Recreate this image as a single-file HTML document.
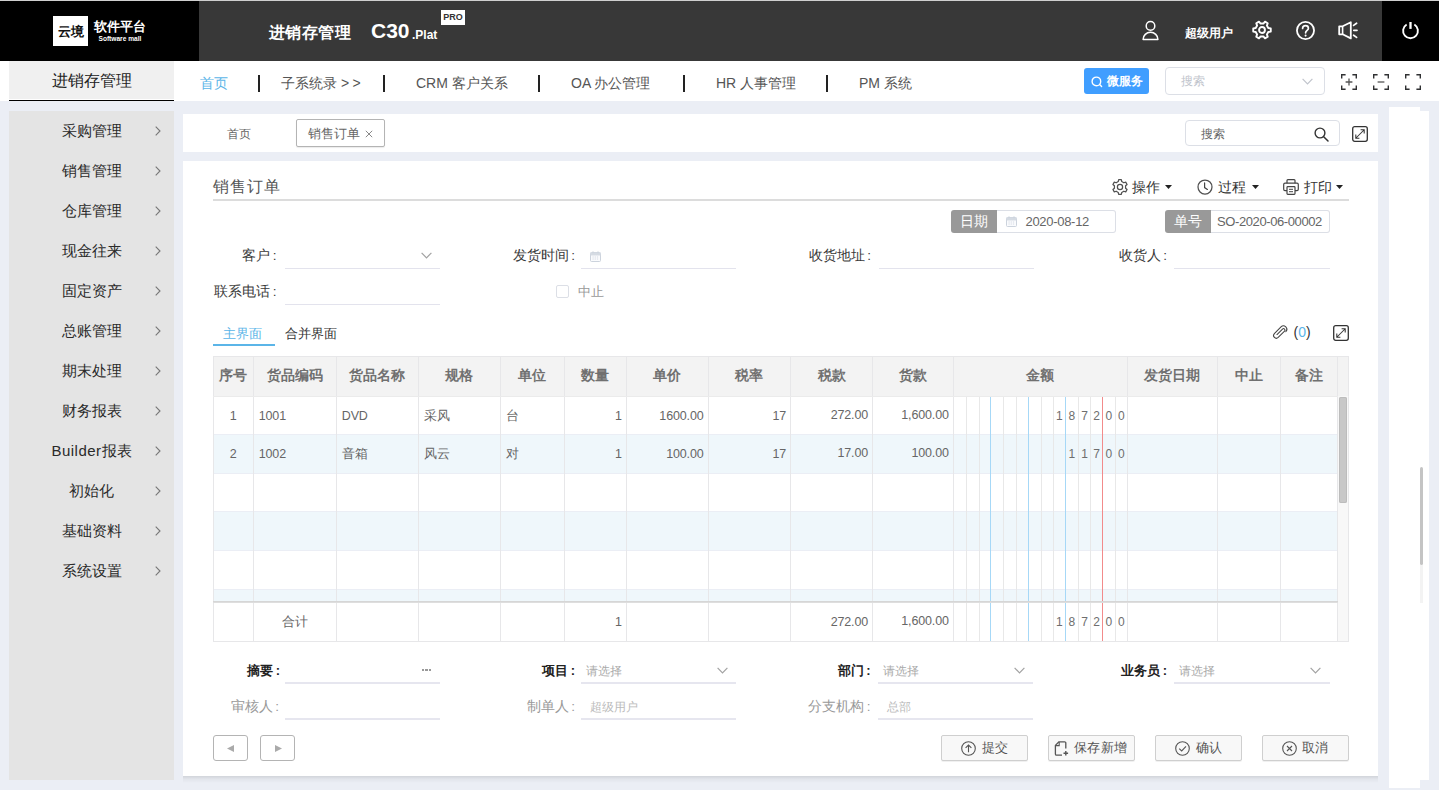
<!DOCTYPE html>
<html lang="zh">
<head>
<meta charset="utf-8">
<title>销售订单</title>
<style>
*{box-sizing:border-box;margin:0;padding:0}
html,body{width:1439px;height:790px;overflow:hidden}
body{position:relative;background:#ebeef5;font-family:"Liberation Sans",sans-serif;color:#333;font-size:13px}
.a{position:absolute;white-space:nowrap}
svg{position:absolute;overflow:visible}
</style>
</head>
<body>
<!-- header -->
<div class="a" style="left:0px;top:0px;width:199px;height:61px;background:#000"></div>
<div class="a" style="left:199px;top:0px;width:1183px;height:61px;background:#383838"></div>
<div class="a" style="left:1382px;top:0px;width:57px;height:61px;background:#000"></div>
<div class="a" style="left:0px;top:0px;width:1439px;height:1px;background:#cfcfcf"></div>
<div class="a" style="left:53px;top:16px;width:35px;height:30px;background:#fff;color:#111;font-weight:bold;font-size:13px;line-height:31px;text-align:center">云境</div>
<div class="a" style="top:17.4px;font-size:13px;line-height:20px;height:20px;color:#fff;font-weight:bold;left:94px;">软件平台</div>
<div class="a" style="top:33.6px;font-size:6.6px;line-height:10px;height:10px;color:#fff;font-weight:bold;left:98.5px;">Software mall</div>
<div class="a" style="top:22.5px;font-size:16px;line-height:20px;height:20px;color:#fff;font-weight:bold;left:269px;letter-spacing:.4px;">进销存管理</div>
<div class="a" style="top:18.5px;font-size:21px;line-height:24px;height:24px;color:#fff;font-weight:bold;left:371px;">C30</div>
<div class="a" style="top:27.5px;font-size:12px;line-height:14px;height:14px;color:#fff;font-weight:bold;left:412px;">.Plat</div>
<div class="a" style="left:441px;top:10px;width:24px;height:15px;background:#fff;color:#333;font-weight:bold;font-size:9px;line-height:15px;text-align:center">PRO</div>
<svg style="left:1141.5px;top:21.2px" width="18" height="20" viewBox="0 0 18 20" ><circle cx="8.5" cy="4.9" r="4.3" fill="none" stroke="#fff" stroke-width="1.5"/><path d="M1.1 18.4 A7.4 7.1 0 0 1 15.9 18.4 Z" fill="none" stroke="#fff" stroke-width="1.5" stroke-linejoin="round"/></svg>
<div class="a" style="top:22.5px;font-size:12px;line-height:20px;height:20px;color:#fff;font-weight:bold;left:1185px;">超级用户</div>
<svg style="left:1252px;top:20px" width="20" height="20" viewBox="0 0 20 20" ><path d="M11.37 3.56 L13.01 1.63 L15.74 3.20 L14.89 5.59 L16.26 7.96 L18.76 8.42 L18.76 11.58 L16.26 12.04 L14.89 14.41 L15.74 16.80 L13.01 18.37 L11.37 16.44 L8.63 16.44 L6.99 18.37 L4.26 16.80 L5.11 14.41 L3.74 12.04 L1.24 11.58 L1.24 8.42 L3.74 7.96 L5.11 5.59 L4.26 3.20 L6.99 1.63 L8.63 3.56 Z" fill="none" stroke="#fff" stroke-width="1.9" stroke-linejoin="round"/><circle cx="10" cy="10" r="2.94" fill="none" stroke="#fff" stroke-width="1.9"/></svg>
<svg style="left:1295.5px;top:20.5px" width="19" height="19" viewBox="0 0 19 19" ><circle cx="9.5" cy="9.5" r="8.55" fill="none" stroke="#fff" stroke-width="1.8"/><path d="M6.6 7.5 C6.6 5.5 7.9 4.6 9.5 4.6 C11.1 4.6 12.4 5.6 12.4 7.2 C12.4 9.3 9.6 9.4 9.6 11.8" fill="none" stroke="#fff" stroke-width="1.7" stroke-linecap="round"/><circle cx="9.6" cy="14.6" r="1.05" fill="#fff"/></svg>
<svg style="left:1338px;top:21px" width="20" height="19" viewBox="0 0 20 19" ><path d="M1.2 5.3 H4.6 L12.8 1.2 V17.4 L4.6 13.3 H1.2 Z" fill="none" stroke="#fff" stroke-width="1.8" stroke-linejoin="round"/><path d="M4.6 5.3 V13.3" stroke="#fff" stroke-width="1.6"/><path d="M15.6 4.4 L18.6 2.2 M15.8 9.3 H19 M15.6 14.2 L18.6 16.4" stroke="#fff" stroke-width="1.7" stroke-linecap="round"/></svg>
<svg style="left:1401px;top:21px" width="19" height="19" viewBox="0 0 19 19" ><path d="M5.65 3.5 A7.4 7.4 0 1 0 13.35 3.5" fill="none" stroke="#fff" stroke-width="1.9"/><path d="M9.5 1 V7.9" stroke="#fff" stroke-width="2.3"/></svg>
<!-- nav -->
<div class="a" style="left:0px;top:61px;width:1439px;height:40px;background:#fff"></div>
<div class="a" style="left:9px;top:61px;width:165px;height:38px;background:#f0f0f0;text-align:center;font-size:16px;line-height:40px;color:#222">进销存管理</div>
<div class="a" style="left:9px;top:99.8px;width:165px;height:1.2px;background:#000"></div>
<div class="a" style="top:73px;font-size:14px;line-height:20px;height:20px;color:#5bb5e8;left:200px;">首页</div>
<div class="a" style="left:258.3px;top:75px;width:1.3px;height:17px;background:#222"></div>
<div class="a" style="left:383.3px;top:75px;width:1.3px;height:17px;background:#222"></div>
<div class="a" style="left:538.3px;top:75px;width:1.3px;height:17px;background:#222"></div>
<div class="a" style="left:683.3px;top:75px;width:1.3px;height:17px;background:#222"></div>
<div class="a" style="left:826.3px;top:75px;width:1.3px;height:17px;background:#222"></div>
<div class="a" style="top:73px;font-size:14px;line-height:20px;height:20px;color:#555;left:281px;">子系统录 <span style="letter-spacing:3.5px">&gt;&gt;</span></div>
<div class="a" style="top:73px;font-size:14px;line-height:20px;height:20px;color:#555;left:416px;">CRM 客户关系</div>
<div class="a" style="top:73px;font-size:14px;line-height:20px;height:20px;color:#555;left:571px;">OA 办公管理</div>
<div class="a" style="top:73px;font-size:14px;line-height:20px;height:20px;color:#555;left:716px;">HR 人事管理</div>
<div class="a" style="top:73px;font-size:14px;line-height:20px;height:20px;color:#555;left:859px;">PM 系统</div>
<div class="a" style="left:1084px;top:68px;width:65px;height:26px;background:#409eff;border-radius:3px"></div>
<svg style="left:1090.5px;top:75.5px" width="12" height="12" viewBox="0 0 12 12" ><circle cx="5.4" cy="5.4" r="4.3" fill="none" stroke="#fff" stroke-width="1.4"/><path d="M8.6 8.6 L10.6 10.6" stroke="#fff" stroke-width="1.4" stroke-linecap="round"/></svg>
<div class="a" style="top:71px;font-size:12px;line-height:20px;height:20px;color:#fff;font-weight:bold;left:1107px;">微服务</div>
<div class="a" style="left:1165px;top:67px;width:160px;height:28px;border:1px solid #dcdfe6;border-radius:4px;background:#fff"></div>
<div class="a" style="top:71px;font-size:12px;line-height:20px;height:20px;color:#c0c4cc;left:1181px;">搜索</div>
<svg style="left:1301.5px;top:77.5px" width="11" height="7" viewBox="0 0 11 7" ><path d="M0.6 0.8 L5.5 5.8 L10.4 0.8" fill="none" stroke="#c0c4cc" stroke-width="1.2"/></svg>
<svg style="left:1341px;top:74px" width="16" height="16" viewBox="0 0 16 16" ><path d="M0.7 4.6 V0.7 H4.6 M11.4 0.7 H15.3 V4.6 M15.3 11.4 V15.3 H11.4 M4.6 15.3 H0.7 V11.4" fill="none" stroke="#303133" stroke-width="1.4"/><path d="M4.6 8 H11.4 M8 4.6 V11.4" stroke="#555" stroke-width="1.3"/></svg>
<svg style="left:1373px;top:74px" width="16" height="16" viewBox="0 0 16 16" ><path d="M0.7 4.6 V0.7 H4.6 M11.4 0.7 H15.3 V4.6 M15.3 11.4 V15.3 H11.4 M4.6 15.3 H0.7 V11.4" fill="none" stroke="#303133" stroke-width="1.4"/><path d="M4.6 8 H11.4" stroke="#555" stroke-width="1.3"/></svg>
<svg style="left:1405px;top:74px" width="16" height="16" viewBox="0 0 16 16" ><path d="M0.7 4.6 V0.7 H4.6 M11.4 0.7 H15.3 V4.6 M15.3 11.4 V15.3 H11.4 M4.6 15.3 H0.7 V11.4" fill="none" stroke="#303133" stroke-width="1.4"/></svg>
<!-- sidebar -->
<div class="a" style="left:9px;top:111px;width:165px;height:669px;background:#e4e4e4"></div>
<div class="a" style="top:121px;font-size:15px;line-height:20px;height:20px;color:#2a2a2a;left:9px;width:165px;text-align:center;">采购管理</div>
<svg style="left:155px;top:126.1px" width="6" height="10" viewBox="0 0 6 10" ><path d="M0.7 0.7 L5 5 L0.7 9.3" fill="none" stroke="#777" stroke-width="1.1"/></svg>
<div class="a" style="top:161px;font-size:15px;line-height:20px;height:20px;color:#2a2a2a;left:9px;width:165px;text-align:center;">销售管理</div>
<svg style="left:155px;top:166.1px" width="6" height="10" viewBox="0 0 6 10" ><path d="M0.7 0.7 L5 5 L0.7 9.3" fill="none" stroke="#777" stroke-width="1.1"/></svg>
<div class="a" style="top:201px;font-size:15px;line-height:20px;height:20px;color:#2a2a2a;left:9px;width:165px;text-align:center;">仓库管理</div>
<svg style="left:155px;top:206.1px" width="6" height="10" viewBox="0 0 6 10" ><path d="M0.7 0.7 L5 5 L0.7 9.3" fill="none" stroke="#777" stroke-width="1.1"/></svg>
<div class="a" style="top:241px;font-size:15px;line-height:20px;height:20px;color:#2a2a2a;left:9px;width:165px;text-align:center;">现金往来</div>
<svg style="left:155px;top:246.1px" width="6" height="10" viewBox="0 0 6 10" ><path d="M0.7 0.7 L5 5 L0.7 9.3" fill="none" stroke="#777" stroke-width="1.1"/></svg>
<div class="a" style="top:281px;font-size:15px;line-height:20px;height:20px;color:#2a2a2a;left:9px;width:165px;text-align:center;">固定资产</div>
<svg style="left:155px;top:286.1px" width="6" height="10" viewBox="0 0 6 10" ><path d="M0.7 0.7 L5 5 L0.7 9.3" fill="none" stroke="#777" stroke-width="1.1"/></svg>
<div class="a" style="top:321px;font-size:15px;line-height:20px;height:20px;color:#2a2a2a;left:9px;width:165px;text-align:center;">总账管理</div>
<svg style="left:155px;top:326.1px" width="6" height="10" viewBox="0 0 6 10" ><path d="M0.7 0.7 L5 5 L0.7 9.3" fill="none" stroke="#777" stroke-width="1.1"/></svg>
<div class="a" style="top:361px;font-size:15px;line-height:20px;height:20px;color:#2a2a2a;left:9px;width:165px;text-align:center;">期末处理</div>
<svg style="left:155px;top:366.1px" width="6" height="10" viewBox="0 0 6 10" ><path d="M0.7 0.7 L5 5 L0.7 9.3" fill="none" stroke="#777" stroke-width="1.1"/></svg>
<div class="a" style="top:401px;font-size:15px;line-height:20px;height:20px;color:#2a2a2a;left:9px;width:165px;text-align:center;">财务报表</div>
<svg style="left:155px;top:406.1px" width="6" height="10" viewBox="0 0 6 10" ><path d="M0.7 0.7 L5 5 L0.7 9.3" fill="none" stroke="#777" stroke-width="1.1"/></svg>
<div class="a" style="top:441px;font-size:15px;line-height:20px;height:20px;color:#2a2a2a;left:9px;width:165px;text-align:center;"><span style="letter-spacing:.5px">Builder</span>报表</div>
<svg style="left:155px;top:446.1px" width="6" height="10" viewBox="0 0 6 10" ><path d="M0.7 0.7 L5 5 L0.7 9.3" fill="none" stroke="#777" stroke-width="1.1"/></svg>
<div class="a" style="top:481px;font-size:15px;line-height:20px;height:20px;color:#2a2a2a;left:9px;width:165px;text-align:center;">初始化</div>
<svg style="left:155px;top:486.1px" width="6" height="10" viewBox="0 0 6 10" ><path d="M0.7 0.7 L5 5 L0.7 9.3" fill="none" stroke="#777" stroke-width="1.1"/></svg>
<div class="a" style="top:521px;font-size:15px;line-height:20px;height:20px;color:#2a2a2a;left:9px;width:165px;text-align:center;">基础资料</div>
<svg style="left:155px;top:526.1px" width="6" height="10" viewBox="0 0 6 10" ><path d="M0.7 0.7 L5 5 L0.7 9.3" fill="none" stroke="#777" stroke-width="1.1"/></svg>
<div class="a" style="top:561px;font-size:15px;line-height:20px;height:20px;color:#2a2a2a;left:9px;width:165px;text-align:center;">系统设置</div>
<svg style="left:155px;top:566.1px" width="6" height="10" viewBox="0 0 6 10" ><path d="M0.7 0.7 L5 5 L0.7 9.3" fill="none" stroke="#777" stroke-width="1.1"/></svg>
<!-- tabbar -->
<div class="a" style="left:183px;top:114px;width:1195px;height:38px;background:#fff"></div>
<div class="a" style="top:123.8px;font-size:12.3px;line-height:20px;height:20px;color:#666;left:227.2px;">首页</div>
<div class="a" style="left:296.2px;top:119.2px;width:88.5px;height:27.8px;border:1px solid #b4b4b4;border-radius:2px;background:#fff;box-shadow:0 1px 1px rgba(0,0,0,.08)"></div>
<div class="a" style="top:124.2px;font-size:12.5px;line-height:20px;height:20px;color:#666;left:308px;">销售订单</div>
<svg style="left:365px;top:130.3px" width="8" height="8" viewBox="0 0 8 8" ><path d="M0.8 0.8 L7.2 7.2 M7.2 0.8 L0.8 7.2" stroke="#888" stroke-width="1"/></svg>
<div class="a" style="left:1185px;top:120px;width:155px;height:26px;border:1px solid #dcdfe6;border-radius:4px;background:#fff"></div>
<div class="a" style="top:123.5px;font-size:12px;line-height:20px;height:20px;color:#666;left:1200.5px;">搜索</div>
<svg style="left:1313.5px;top:126.5px" width="15" height="15" viewBox="0 0 15 15" ><circle cx="6" cy="6" r="4.9" fill="none" stroke="#333" stroke-width="1.4"/><path d="M9.7 9.7 L14 14" stroke="#333" stroke-width="1.5" stroke-linecap="round"/></svg>
<svg style="left:1351.5px;top:125.5px" width="16" height="16" viewBox="0 0 16 16" ><rect x="0.7" y="0.7" width="14.6" height="14.6" rx="2" fill="none" stroke="#333" stroke-width="1.3"/><path d="M4 12 L12 4 M8.6 3.8 H12.2 V7.4 M3.8 8.6 V12.2 H7.4" fill="none" stroke="#333" stroke-width="1.05"/></svg>
<!-- right panel -->
<div class="a" style="left:1389px;top:107px;width:31px;height:681px;background:#fff"></div>
<div class="a" style="left:1420px;top:111px;width:9px;height:669px;background:#fff"></div>
<div class="a" style="left:1420px;top:467px;width:3px;height:98px;background:#c4c4c4;border-radius:2px"></div>
<div class="a" style="left:1420px;top:565px;width:3px;height:38px;background:#f3f3f3"></div>
<!-- main panel -->
<div class="a" style="left:183px;top:161px;width:1195px;height:615px;background:#fff"></div>
<div class="a" style="left:183px;top:776px;width:1195px;height:7px;background:linear-gradient(to bottom,rgba(0,0,0,.11),rgba(0,0,0,.04) 45%,rgba(0,0,0,0))"></div>
<div class="a" style="top:176.6px;font-size:16px;line-height:20px;height:20px;color:#555;left:213px;letter-spacing:.9px;">销售订单</div>
<div class="a" style="left:213px;top:199px;width:1136px;height:2px;background:#dcdcdc"></div>
<svg style="left:1111.7px;top:179.2px" width="16" height="16" viewBox="0 0 16 16" ><path d="M6.24 2.58 L6.67 0.62 L9.33 0.62 L9.76 2.58 L11.81 3.76 L13.73 3.16 L15.06 5.46 L13.58 6.81 L13.58 9.19 L15.06 10.54 L13.73 12.84 L11.81 12.24 L9.76 13.42 L9.33 15.38 L6.67 15.38 L6.24 13.42 L4.19 12.24 L2.27 12.84 L0.94 10.54 L2.42 9.19 L2.42 6.81 L0.94 5.46 L2.27 3.16 L4.19 3.76 Z" fill="none" stroke="#505050" stroke-width="1.25" stroke-linejoin="round"/><circle cx="8" cy="8" r="2.62" fill="none" stroke="#505050" stroke-width="1.25"/></svg>
<div class="a" style="top:176.9px;font-size:14px;line-height:20px;height:20px;color:#333;left:1132px;">操作</div>
<svg style="left:1165px;top:185.3px" width="7" height="4" viewBox="0 0 7 4" ><path d="M0 0 H7 L3.5 4 Z" fill="#222"/></svg>
<svg style="left:1197px;top:178.8px" width="16" height="16" viewBox="0 0 16 16" ><circle cx="8" cy="8" r="7" fill="none" stroke="#505050" stroke-width="1.25"/><path d="M7.6 3.9 V8.6 L10.4 10.4" fill="none" stroke="#444" stroke-width="1.2" stroke-linecap="round"/></svg>
<div class="a" style="top:176.9px;font-size:14px;line-height:20px;height:20px;color:#333;left:1218px;">过程</div>
<svg style="left:1251.5px;top:185.3px" width="7" height="4" viewBox="0 0 7 4" ><path d="M0 0 H7 L3.5 4 Z" fill="#222"/></svg>
<svg style="left:1283px;top:179.3px" width="16" height="16" viewBox="0 0 16 16" ><path d="M4 4.2 V1.6 Q4 0.7 4.9 0.7 H11.1 Q12 0.7 12 1.6 V4.2" fill="none" stroke="#444" stroke-width="1.2"/><path d="M4 11.6 H2 Q0.7 11.6 0.7 10.3 V5.6 Q0.7 4.2 2 4.2 H14 Q15.3 4.2 15.3 5.6 V10.3 Q15.3 11.6 14 11.6 H12" fill="none" stroke="#444" stroke-width="1.2"/><rect x="4" y="7.6" width="8" height="7.7" rx="0.8" fill="none" stroke="#444" stroke-width="1.2"/><path d="M6 10.3 H10 M6 12.7 H10" stroke="#444" stroke-width="1"/></svg>
<div class="a" style="top:176.9px;font-size:14px;line-height:20px;height:20px;color:#333;left:1304px;">打印</div>
<svg style="left:1335.8px;top:185.3px" width="7" height="4" viewBox="0 0 7 4" ><path d="M0 0 H7 L3.5 4 Z" fill="#222"/></svg>
<div class="a" style="left:997px;top:210px;width:119px;height:23px;border:1px solid #dcdfe6;border-left:none;border-radius:0 3px 3px 0;background:#fff"></div>
<div class="a" style="left:951px;top:210px;width:46px;height:23px;background:#999;border-radius:3px 0 0 3px;color:#fff;font-size:13.5px;line-height:23px;text-align:center">日期</div>
<svg style="left:1006px;top:216px" width="11" height="11" viewBox="0 0 11 11" ><rect x="0.5" y="1.5" width="10" height="9" rx="1" fill="#fafbfd" stroke="#ccd3dd" stroke-width="1"/><rect x="0.5" y="1.5" width="10" height="3" fill="#d5dbe3"/><path d="M3 0.3 V2.3 M8 0.3 V2.3" stroke="#ccd3dd" stroke-width="1"/><path d="M2.5 6 H8.5 M2.5 8 H8.5" stroke="#ccd3dd" stroke-width="0.8" stroke-dasharray="1.2 1"/></svg>
<div class="a" style="top:211.6px;font-size:13px;line-height:20px;height:20px;color:#666;left:1025.5px;letter-spacing:-.3px;">2020-08-12</div>
<div class="a" style="left:1211px;top:210px;width:119px;height:23px;border:1px solid #dcdfe6;border-left:none;border-radius:0 3px 3px 0;background:#fff"></div>
<div class="a" style="left:1165px;top:210px;width:46px;height:23px;background:#999;border-radius:3px 0 0 3px;color:#fff;font-size:13.5px;line-height:23px;text-align:center">单号</div>
<div class="a" style="top:211.6px;font-size:13px;line-height:20px;height:20px;color:#666;left:1217px;letter-spacing:-.4px;">SO-2020-06-00002</div>
<div class="a" style="top:246px;font-size:13.5px;line-height:20px;height:20px;color:#3a3a3a;left:76.5px;width:200px;text-align:right;">客户<span style="padding-left:2.3px">:</span></div>
<div class="a" style="left:285px;top:267.6px;width:155px;height:1.5px;background:#e3e3ed"></div>
<svg style="left:420.5px;top:252px" width="11" height="7" viewBox="0 0 11 7" ><path d="M0.6 0.8 L5.5 5.8 L10.4 0.8" fill="none" stroke="#a2a2a2" stroke-width="1.2"/></svg>
<div class="a" style="top:246px;font-size:13.5px;line-height:20px;height:20px;color:#3a3a3a;left:375px;width:200px;text-align:right;">发货时间<span style="padding-left:2.3px">:</span></div>
<svg style="left:589.5px;top:250.5px" width="11" height="11" viewBox="0 0 11 11" ><rect x="0.5" y="1.5" width="10" height="9" rx="1" fill="#fafbfd" stroke="#ccd3dd" stroke-width="1"/><rect x="0.5" y="1.5" width="10" height="3" fill="#d5dbe3"/><path d="M3 0.3 V2.3 M8 0.3 V2.3" stroke="#ccd3dd" stroke-width="1"/><path d="M2.5 6 H8.5 M2.5 8 H8.5" stroke="#ccd3dd" stroke-width="0.8" stroke-dasharray="1.2 1"/></svg>
<div class="a" style="left:581px;top:267.6px;width:155px;height:1.5px;background:#e3e3ed"></div>
<div class="a" style="top:246px;font-size:13.5px;line-height:20px;height:20px;color:#3a3a3a;left:671px;width:200px;text-align:right;">收货地址<span style="padding-left:2.3px">:</span></div>
<div class="a" style="left:879px;top:267.6px;width:155px;height:1.5px;background:#e3e3ed"></div>
<div class="a" style="top:246px;font-size:13.5px;line-height:20px;height:20px;color:#3a3a3a;left:967px;width:200px;text-align:right;">收货人<span style="padding-left:2.3px">:</span></div>
<div class="a" style="left:1174px;top:267.6px;width:155.5px;height:1.5px;background:#e3e3ed"></div>
<div class="a" style="top:281.7px;font-size:13.5px;line-height:20px;height:20px;color:#3a3a3a;left:76.5px;width:200px;text-align:right;">联系电话<span style="padding-left:2.3px">:</span></div>
<div class="a" style="left:285px;top:303.7px;width:155px;height:1.5px;background:#e3e3ed"></div>
<div class="a" style="left:556px;top:285px;width:13px;height:13px;border:1px solid #dcdfe6;border-radius:2px;background:#fff"></div>
<div class="a" style="top:281.8px;font-size:13px;line-height:20px;height:20px;color:#999;left:578px;">中止</div>
<div class="a" style="top:323.8px;font-size:13px;line-height:20px;height:20px;color:#5bb5e8;left:223px;">主界面</div>
<div class="a" style="left:213px;top:344px;width:61.5px;height:2px;background:#5bb5e8"></div>
<div class="a" style="top:323.8px;font-size:13px;line-height:20px;height:20px;color:#333;left:284.5px;">合并界面</div>
<svg style="left:1271.8px;top:325px" width="15" height="15" viewBox="0 0 16 16" ><path d="M5.3 10.2 L11.2 4.3 A1.55 1.55 0 0 1 13.4 6.5 L6.6 13.3 A2.9 2.9 0 0 1 2.5 9.2 L9.6 2.1 A3.6 3.6 0 0 1 14.7 7.2" transform="rotate(0 8 8)" fill="none" stroke="#444" stroke-width="1.1" stroke-linecap="round"/></svg>
<div class="a" style="top:322.4px;font-size:14px;line-height:20px;height:20px;color:#333;left:1293.5px;">(<span style="color:#5bb5e8">0</span>)</div>
<svg style="left:1333.2px;top:325.3px" width="16" height="16" viewBox="0 0 16 16" ><rect x="0.7" y="0.7" width="14.6" height="14.6" rx="2" fill="none" stroke="#333" stroke-width="1.3"/><path d="M4 12 L12 4 M8.6 3.8 H12.2 V7.4 M3.8 8.6 V12.2 H7.4" fill="none" stroke="#333" stroke-width="1.05"/></svg>
<!-- table -->
<div class="a" style="left:213px;top:356px;width:1136px;height:40px;background:#f3f3f3"></div>
<div class="a" style="left:213px;top:396.0px;width:1125px;height:38.75px;background:#fff;border-bottom:1px solid #ebeef5"></div>
<div class="a" style="left:213px;top:434.75px;width:1125px;height:38.75px;background:#eff7fb;border-bottom:1px solid #ebeef5"></div>
<div class="a" style="left:213px;top:473.5px;width:1125px;height:38.75px;background:#fff;border-bottom:1px solid #ebeef5"></div>
<div class="a" style="left:213px;top:512.25px;width:1125px;height:38.75px;background:#eff7fb;border-bottom:1px solid #ebeef5"></div>
<div class="a" style="left:213px;top:551.0px;width:1125px;height:38.75px;background:#fff;border-bottom:1px solid #ebeef5"></div>
<div class="a" style="left:213px;top:589.75px;width:1125px;height:12.25px;background:#eff7fb;border-bottom:1px solid #ebeef5"></div>
<div class="a" style="left:213px;top:602px;width:1136px;height:39.5px;background:#fff"></div>
<div class="a" style="left:965.75px;top:396px;width:1px;height:245.5px;background:#e8e8e8"></div>
<div class="a" style="left:978.75px;top:396px;width:1px;height:245.5px;background:#e8e8e8"></div>
<div class="a" style="left:990.25px;top:396px;width:1px;height:245.5px;background:#a6d8f7"></div>
<div class="a" style="left:1002.75px;top:396px;width:1px;height:245.5px;background:#e8e8e8"></div>
<div class="a" style="left:1015.75px;top:396px;width:1px;height:245.5px;background:#e8e8e8"></div>
<div class="a" style="left:1028.0px;top:396px;width:1px;height:245.5px;background:#a6d8f7"></div>
<div class="a" style="left:1040.75px;top:396px;width:1px;height:245.5px;background:#e8e8e8"></div>
<div class="a" style="left:1052.75px;top:396px;width:1px;height:245.5px;background:#e8e8e8"></div>
<div class="a" style="left:1064.75px;top:396px;width:1px;height:245.5px;background:#a6d8f7"></div>
<div class="a" style="left:1077.75px;top:396px;width:1px;height:245.5px;background:#e8e8e8"></div>
<div class="a" style="left:1090.25px;top:396px;width:1px;height:245.5px;background:#e8e8e8"></div>
<div class="a" style="left:1102.0px;top:396px;width:1px;height:245.5px;background:#f28b8b"></div>
<div class="a" style="left:1114.5px;top:396px;width:1px;height:245.5px;background:#e8e8e8"></div>
<div class="a" style="left:252.75px;top:356px;width:1px;height:285.5px;background:#e7e7e9"></div>
<div class="a" style="left:335.75px;top:356px;width:1px;height:285.5px;background:#e7e7e9"></div>
<div class="a" style="left:417.75px;top:356px;width:1px;height:285.5px;background:#e7e7e9"></div>
<div class="a" style="left:500.0px;top:356px;width:1px;height:285.5px;background:#e7e7e9"></div>
<div class="a" style="left:563.75px;top:356px;width:1px;height:285.5px;background:#e7e7e9"></div>
<div class="a" style="left:625.75px;top:356px;width:1px;height:285.5px;background:#e7e7e9"></div>
<div class="a" style="left:707.5px;top:356px;width:1px;height:285.5px;background:#e7e7e9"></div>
<div class="a" style="left:790.0px;top:356px;width:1px;height:285.5px;background:#e7e7e9"></div>
<div class="a" style="left:872.0px;top:356px;width:1px;height:285.5px;background:#e7e7e9"></div>
<div class="a" style="left:952.75px;top:356px;width:1px;height:285.5px;background:#e7e7e9"></div>
<div class="a" style="left:1127.0px;top:356px;width:1px;height:285.5px;background:#e7e7e9"></div>
<div class="a" style="left:1216.75px;top:356px;width:1px;height:285.5px;background:#e7e7e9"></div>
<div class="a" style="left:1279.75px;top:356px;width:1px;height:285.5px;background:#e7e7e9"></div>
<div class="a" style="left:1337.25px;top:356px;width:1px;height:285.5px;background:#e7e7e9"></div>
<div class="a" style="left:213px;top:356px;width:1136px;height:285.5px;border:1px solid #e7e7e9"></div>
<div class="a" style="left:213px;top:395.5px;width:1136px;height:1px;background:#ebebeb"></div>
<div class="a" style="left:213px;top:601px;width:1125px;height:2px;background:linear-gradient(#d2d2d2,#e2e2e2)"></div>
<div class="a" style="top:366.3px;font-size:13.5px;line-height:20px;height:20px;color:#707070;font-weight:bold;left:213px;width:40.25px;text-align:center;">序号</div>
<div class="a" style="top:366.3px;font-size:13.5px;line-height:20px;height:20px;color:#707070;font-weight:bold;left:253.25px;width:83.0px;text-align:center;">货品编码</div>
<div class="a" style="top:366.3px;font-size:13.5px;line-height:20px;height:20px;color:#707070;font-weight:bold;left:336.25px;width:82.0px;text-align:center;">货品名称</div>
<div class="a" style="top:366.3px;font-size:13.5px;line-height:20px;height:20px;color:#707070;font-weight:bold;left:418.25px;width:82.25px;text-align:center;">规格</div>
<div class="a" style="top:366.3px;font-size:13.5px;line-height:20px;height:20px;color:#707070;font-weight:bold;left:500.5px;width:63.75px;text-align:center;">单位</div>
<div class="a" style="top:366.3px;font-size:13.5px;line-height:20px;height:20px;color:#707070;font-weight:bold;left:564.25px;width:62.0px;text-align:center;">数量</div>
<div class="a" style="top:366.3px;font-size:13.5px;line-height:20px;height:20px;color:#707070;font-weight:bold;left:626.25px;width:81.75px;text-align:center;">单价</div>
<div class="a" style="top:366.3px;font-size:13.5px;line-height:20px;height:20px;color:#707070;font-weight:bold;left:708px;width:82.5px;text-align:center;">税率</div>
<div class="a" style="top:366.3px;font-size:13.5px;line-height:20px;height:20px;color:#707070;font-weight:bold;left:790.5px;width:82.0px;text-align:center;">税款</div>
<div class="a" style="top:366.3px;font-size:13.5px;line-height:20px;height:20px;color:#707070;font-weight:bold;left:872.5px;width:80.75px;text-align:center;">货款</div>
<div class="a" style="top:366.3px;font-size:13.5px;line-height:20px;height:20px;color:#707070;font-weight:bold;left:953.25px;width:174.25px;text-align:center;">金额</div>
<div class="a" style="top:366.3px;font-size:13.5px;line-height:20px;height:20px;color:#707070;font-weight:bold;left:1127.5px;width:89.75px;text-align:center;">发货日期</div>
<div class="a" style="top:366.3px;font-size:13.5px;line-height:20px;height:20px;color:#707070;font-weight:bold;left:1217.25px;width:63.0px;text-align:center;">中止</div>
<div class="a" style="top:366.3px;font-size:13.5px;line-height:20px;height:20px;color:#707070;font-weight:bold;left:1280.25px;width:57.5px;text-align:center;">备注</div>
<div class="a" style="top:405.8px;font-size:12.5px;line-height:20px;height:20px;color:#666;left:213px;width:40.25px;text-align:center;">1</div>
<div class="a" style="top:405.8px;font-size:12.5px;line-height:20px;height:20px;color:#666;left:258.75px;letter-spacing:-.15px;">1001</div>
<div class="a" style="top:405.8px;font-size:12.5px;line-height:20px;height:20px;color:#666;left:341.75px;letter-spacing:-.15px;">DVD</div>
<div class="a" style="top:405.8px;font-size:12.5px;line-height:20px;height:20px;color:#666;left:423.75px;letter-spacing:-.15px;">采风</div>
<div class="a" style="top:405.8px;font-size:12.5px;line-height:20px;height:20px;color:#666;left:506px;letter-spacing:-.15px;">台</div>
<div class="a" style="top:405.8px;font-size:12.5px;line-height:20px;height:20px;color:#666;left:421.75px;width:200px;text-align:right;letter-spacing:-.15px;">1</div>
<div class="a" style="top:405.8px;font-size:12.5px;line-height:20px;height:20px;color:#666;left:503.5px;width:200px;text-align:right;letter-spacing:-.15px;">1600.00</div>
<div class="a" style="top:405.8px;font-size:12.5px;line-height:20px;height:20px;color:#666;left:586px;width:200px;text-align:right;letter-spacing:-.15px;">17</div>
<div class="a" style="top:404.8px;font-size:12.5px;line-height:20px;height:20px;color:#666;left:668px;width:200px;text-align:right;letter-spacing:-.15px;">272.00</div>
<div class="a" style="top:404.8px;font-size:12.5px;line-height:20px;height:20px;color:#666;left:748.75px;width:200px;text-align:right;letter-spacing:-.15px;">1,600.00</div>
<div class="a" style="top:405.8px;font-size:12px;line-height:20px;height:20px;color:#6e6e6e;left:1053.25px;width:12px;text-align:center;">1</div>
<div class="a" style="top:405.8px;font-size:12px;line-height:20px;height:20px;color:#6e6e6e;left:1065.75px;width:12px;text-align:center;">8</div>
<div class="a" style="top:405.8px;font-size:12px;line-height:20px;height:20px;color:#6e6e6e;left:1078.5px;width:12px;text-align:center;">7</div>
<div class="a" style="top:405.8px;font-size:12px;line-height:20px;height:20px;color:#6e6e6e;left:1090.62px;width:12px;text-align:center;">2</div>
<div class="a" style="top:405.8px;font-size:12px;line-height:20px;height:20px;color:#6e6e6e;left:1102.75px;width:12px;text-align:center;">0</div>
<div class="a" style="top:405.8px;font-size:12px;line-height:20px;height:20px;color:#6e6e6e;left:1115.25px;width:12px;text-align:center;">0</div>
<div class="a" style="top:444.4px;font-size:12.5px;line-height:20px;height:20px;color:#666;left:213px;width:40.25px;text-align:center;">2</div>
<div class="a" style="top:444.4px;font-size:12.5px;line-height:20px;height:20px;color:#666;left:258.75px;letter-spacing:-.15px;">1002</div>
<div class="a" style="top:444.4px;font-size:12.5px;line-height:20px;height:20px;color:#666;left:341.75px;letter-spacing:-.15px;">音箱</div>
<div class="a" style="top:444.4px;font-size:12.5px;line-height:20px;height:20px;color:#666;left:423.75px;letter-spacing:-.15px;">风云</div>
<div class="a" style="top:444.4px;font-size:12.5px;line-height:20px;height:20px;color:#666;left:506px;letter-spacing:-.15px;">对</div>
<div class="a" style="top:444.4px;font-size:12.5px;line-height:20px;height:20px;color:#666;left:421.75px;width:200px;text-align:right;letter-spacing:-.15px;">1</div>
<div class="a" style="top:444.4px;font-size:12.5px;line-height:20px;height:20px;color:#666;left:503.5px;width:200px;text-align:right;letter-spacing:-.15px;">100.00</div>
<div class="a" style="top:444.4px;font-size:12.5px;line-height:20px;height:20px;color:#666;left:586px;width:200px;text-align:right;letter-spacing:-.15px;">17</div>
<div class="a" style="top:443.4px;font-size:12.5px;line-height:20px;height:20px;color:#666;left:668px;width:200px;text-align:right;letter-spacing:-.15px;">17.00</div>
<div class="a" style="top:443.4px;font-size:12.5px;line-height:20px;height:20px;color:#666;left:748.75px;width:200px;text-align:right;letter-spacing:-.15px;">100.00</div>
<div class="a" style="top:444.4px;font-size:12px;line-height:20px;height:20px;color:#6e6e6e;left:1065.75px;width:12px;text-align:center;">1</div>
<div class="a" style="top:444.4px;font-size:12px;line-height:20px;height:20px;color:#6e6e6e;left:1078.5px;width:12px;text-align:center;">1</div>
<div class="a" style="top:444.4px;font-size:12px;line-height:20px;height:20px;color:#6e6e6e;left:1090.62px;width:12px;text-align:center;">7</div>
<div class="a" style="top:444.4px;font-size:12px;line-height:20px;height:20px;color:#6e6e6e;left:1102.75px;width:12px;text-align:center;">0</div>
<div class="a" style="top:444.4px;font-size:12px;line-height:20px;height:20px;color:#6e6e6e;left:1115.25px;width:12px;text-align:center;">0</div>
<div class="a" style="top:611.8px;font-size:12.5px;line-height:20px;height:20px;color:#666;left:253.25px;width:83.0px;text-align:center;">合计</div>
<div class="a" style="top:611.8px;font-size:12.5px;line-height:20px;height:20px;color:#666;left:421.75px;width:200px;text-align:right;letter-spacing:-.15px;">1</div>
<div class="a" style="top:611.8px;font-size:12.5px;line-height:20px;height:20px;color:#666;left:668px;width:200px;text-align:right;letter-spacing:-.15px;">272.00</div>
<div class="a" style="top:610.8px;font-size:12.5px;line-height:20px;height:20px;color:#666;left:748.75px;width:200px;text-align:right;letter-spacing:-.15px;">1,600.00</div>
<div class="a" style="top:611.8px;font-size:12px;line-height:20px;height:20px;color:#6e6e6e;left:1053.25px;width:12px;text-align:center;">1</div>
<div class="a" style="top:611.8px;font-size:12px;line-height:20px;height:20px;color:#6e6e6e;left:1065.75px;width:12px;text-align:center;">8</div>
<div class="a" style="top:611.8px;font-size:12px;line-height:20px;height:20px;color:#6e6e6e;left:1078.5px;width:12px;text-align:center;">7</div>
<div class="a" style="top:611.8px;font-size:12px;line-height:20px;height:20px;color:#6e6e6e;left:1090.62px;width:12px;text-align:center;">2</div>
<div class="a" style="top:611.8px;font-size:12px;line-height:20px;height:20px;color:#6e6e6e;left:1102.75px;width:12px;text-align:center;">0</div>
<div class="a" style="top:611.8px;font-size:12px;line-height:20px;height:20px;color:#6e6e6e;left:1115.25px;width:12px;text-align:center;">0</div>
<div class="a" style="left:1338.3px;top:396px;width:10.2px;height:245.0px;background:#f8f8f8"></div>
<div class="a" style="left:1338.6px;top:396.5px;width:8.4px;height:106.5px;background:#c8c8c8;border-radius:2px;box-shadow:inset 0 0 0 1px #bcbcbc"></div>
<!-- footer form -->
<div class="a" style="top:660.5px;font-size:13px;line-height:20px;height:20px;color:#222;font-weight:bold;left:80px;width:200px;text-align:right;">摘要<span style="padding-left:2.3px">:</span></div>
<div class="a" style="left:285px;top:682px;width:155px;height:2px;background:#e6e6ef"></div>
<div class="a" style="left:421.8px;top:669px;width:2.3px;height:2.3px;background:#999"></div>
<div class="a" style="left:425.4px;top:669px;width:2.3px;height:2.3px;background:#999"></div>
<div class="a" style="left:429.0px;top:669px;width:2.3px;height:2.3px;background:#999"></div>
<div class="a" style="top:660.5px;font-size:13px;line-height:20px;height:20px;color:#222;font-weight:bold;left:375px;width:200px;text-align:right;">项目<span style="padding-left:2.3px">:</span></div>
<div class="a" style="top:660.5px;font-size:12px;line-height:20px;height:20px;color:#aaa;left:586px;">请选择</div>
<svg style="left:717px;top:666.5px" width="11" height="7" viewBox="0 0 11 7" ><path d="M0.6 0.8 L5.5 5.8 L10.4 0.8" fill="none" stroke="#a2a2a2" stroke-width="1.2"/></svg>
<div class="a" style="left:581px;top:682px;width:155px;height:2px;background:#e6e6ef"></div>
<div class="a" style="top:660.5px;font-size:13px;line-height:20px;height:20px;color:#222;font-weight:bold;left:670.5px;width:200px;text-align:right;">部门<span style="padding-left:2.3px">:</span></div>
<div class="a" style="top:660.5px;font-size:12px;line-height:20px;height:20px;color:#aaa;left:882.5px;">请选择</div>
<svg style="left:1013.5px;top:666.5px" width="11" height="7" viewBox="0 0 11 7" ><path d="M0.6 0.8 L5.5 5.8 L10.4 0.8" fill="none" stroke="#a2a2a2" stroke-width="1.2"/></svg>
<div class="a" style="left:878px;top:682px;width:154.5px;height:2px;background:#e6e6ef"></div>
<div class="a" style="top:660.5px;font-size:13px;line-height:20px;height:20px;color:#222;font-weight:bold;left:967px;width:200px;text-align:right;">业务员<span style="padding-left:2.3px">:</span></div>
<div class="a" style="top:660.5px;font-size:12px;line-height:20px;height:20px;color:#aaa;left:1179px;">请选择</div>
<svg style="left:1310px;top:666.5px" width="11" height="7" viewBox="0 0 11 7" ><path d="M0.6 0.8 L5.5 5.8 L10.4 0.8" fill="none" stroke="#a2a2a2" stroke-width="1.2"/></svg>
<div class="a" style="left:1174px;top:682px;width:155.5px;height:2px;background:#e6e6ef"></div>
<div class="a" style="top:696.6px;font-size:13.5px;line-height:20px;height:20px;color:#999;left:79px;width:200px;text-align:right;">审核人<span style="padding-left:2.3px">:</span></div>
<div class="a" style="left:285px;top:718px;width:155px;height:2px;background:#e6e6ef"></div>
<div class="a" style="top:696.6px;font-size:13.5px;line-height:20px;height:20px;color:#999;left:375px;width:200px;text-align:right;">制单人<span style="padding-left:2.3px">:</span></div>
<div class="a" style="top:696.6px;font-size:12px;line-height:20px;height:20px;color:#bbb;left:590px;">超级用户</div>
<div class="a" style="left:581px;top:718px;width:155px;height:2px;background:#e6e6ef"></div>
<div class="a" style="top:696.6px;font-size:13.5px;line-height:20px;height:20px;color:#999;left:670.5px;width:200px;text-align:right;">分支机构<span style="padding-left:2.3px">:</span></div>
<div class="a" style="top:696.6px;font-size:12px;line-height:20px;height:20px;color:#bbb;left:886.5px;">总部</div>
<div class="a" style="left:878px;top:718px;width:154.5px;height:2px;background:#e6e6ef"></div>
<div class="a" style="left:213px;top:735px;width:34.5px;height:26px;border:1px solid #b4b4b4;border-radius:3px;background:#fff"></div>
<svg style="left:226.5px;top:744.5px" width="7" height="7" viewBox="0 0 7 7" ><path d="M7 0 V7 L0 3.5 Z" fill="#aaa"/></svg>
<div class="a" style="left:260.3px;top:735px;width:34.4px;height:26px;border:1px solid #b4b4b4;border-radius:3px;background:#fff"></div>
<svg style="left:274.5px;top:744.5px" width="7" height="7" viewBox="0 0 7 7" ><path d="M0 0 V7 L7 3.5 Z" fill="#aaa"/></svg>
<div class="a" style="left:941px;top:735px;width:86.5px;height:26px;border:1px solid #cfcfcf;border-radius:2px;background:#f8f8f8;box-shadow:0 1px 0 rgba(0,0,0,.06)"></div>
<svg style="left:961px;top:740.5px" width="15" height="15" viewBox="0 0 15 15" ><circle cx="7.5" cy="7.5" r="6.8" fill="none" stroke="#555" stroke-width="1.1"/><path d="M7.5 11.2 V4.2 M4.6 6.9 L7.5 4 L10.4 6.9" fill="none" stroke="#555" stroke-width="1.1"/></svg>
<div class="a" style="top:738px;font-size:13.3px;line-height:20px;height:20px;color:#555;left:982px;">提交</div>
<div class="a" style="left:1048px;top:735px;width:86.5px;height:26px;border:1px solid #cfcfcf;border-radius:2px;background:#f8f8f8;box-shadow:0 1px 0 rgba(0,0,0,.06)"></div>
<svg style="left:1053.5px;top:740.5px" width="15" height="15" viewBox="0 0 15 15" ><path d="M11.8 7.6 V2 Q11.8 0.8 10.6 0.8 H5 L1.4 4.4 V13 Q1.4 14.2 2.6 14.2 H8" fill="none" stroke="#555" stroke-width="1.3" stroke-linejoin="round"/><path d="M5.2 1 V4.6 H1.6" fill="none" stroke="#555" stroke-width="1.1"/><path d="M11.8 10 V14.6 M9.5 12.3 H14.1" stroke="#555" stroke-width="1.4"/></svg>
<div class="a" style="top:738px;font-size:13px;line-height:20px;height:20px;color:#555;left:1074px;letter-spacing:.4px;">保存新增</div>
<div class="a" style="left:1155px;top:735px;width:86.5px;height:26px;border:1px solid #cfcfcf;border-radius:2px;background:#f8f8f8;box-shadow:0 1px 0 rgba(0,0,0,.06)"></div>
<svg style="left:1175px;top:740.5px" width="15" height="15" viewBox="0 0 15 15" ><circle cx="7.5" cy="7.5" r="6.8" fill="none" stroke="#555" stroke-width="1.1"/><path d="M4.2 7.6 L6.7 10 L11 5.4" fill="none" stroke="#555" stroke-width="1.1"/></svg>
<div class="a" style="top:738px;font-size:13.3px;line-height:20px;height:20px;color:#555;left:1195.5px;">确认</div>
<div class="a" style="left:1262px;top:735px;width:86.5px;height:26px;border:1px solid #cfcfcf;border-radius:2px;background:#f8f8f8;box-shadow:0 1px 0 rgba(0,0,0,.06)"></div>
<svg style="left:1281.5px;top:740.5px" width="15" height="15" viewBox="0 0 15 15" ><circle cx="7.5" cy="7.5" r="6.8" fill="none" stroke="#555" stroke-width="1.1"/><path d="M5 5 L10 10 M10 5 L5 10" fill="none" stroke="#555" stroke-width="1.1"/></svg>
<div class="a" style="top:738px;font-size:13.3px;line-height:20px;height:20px;color:#555;left:1302px;">取消</div>
</body>
</html>
